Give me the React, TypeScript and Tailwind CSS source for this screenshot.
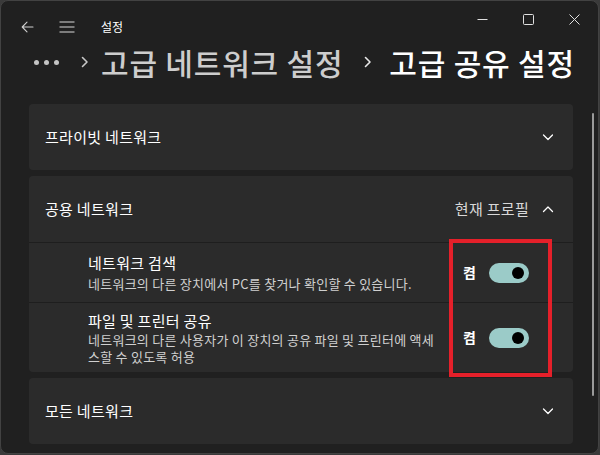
import React from "react";

const font = { fontFamily: '"Noto Sans CJK KR", "Noto Sans", sans-serif' };

function ChevronDown() {
  return (
    <svg width="14" height="14" viewBox="0 0 14 14" fill="none">
      <path d="M2.5 5 L7 9.5 L11.5 5" stroke="#ffffff" strokeWidth="1.3" strokeLinecap="round" strokeLinejoin="round" />
    </svg>
  );
}
function ChevronUp() {
  return (
    <svg width="14" height="14" viewBox="0 0 14 14" fill="none">
      <path d="M2.5 9.5 L7 5 L11.5 9.5" stroke="#ffffff" strokeWidth="1.3" strokeLinecap="round" strokeLinejoin="round" />
    </svg>
  );
}

function Toggle() {
  return (
    <div className="flex items-center gap-[13px]">
      <span className="text-[14px] font-semibold text-white">켬</span>
      <div className="w-[40px] h-[20px] rounded-full bg-[#9bcbc8] flex items-center justify-end pr-[5px]">
        <div className="w-[12px] h-[12px] rounded-full bg-black" />
      </div>
    </div>
  );
}

function Header({ title, right, up }: { title: string; right?: string; up?: boolean }) {
  return (
    <div className="h-[66px] flex items-center pl-[16px] pr-[18px]">
      <span className="flex-1 text-[15px] tracking-[0.3px] text-white">{title}</span>
      {right && <span className="text-[15px] tracking-[0.3px] text-[#d8d8d8] mr-[12px]">{right}</span>}
      {up ? <ChevronUp /> : <ChevronDown />}
    </div>
  );
}

export default function App() {
  return (
    <div className="w-[600px] h-[455px] bg-[#3a3a3a] overflow-hidden" style={font}>
      <div className="relative w-[599px] h-[454px] bg-[#202020] rounded-[8px] border border-[#424242] overflow-hidden">
        {/* title bar */}
        <div className="h-[46px] flex items-start">
          <div className="flex items-center h-[52px] pl-[20px]">
            <svg width="13" height="12" viewBox="0 0 13 12" fill="none">
              <path d="M12 6 H1.5 M6 1.2 L1.2 6 L6 10.8" stroke="#cfcfcf" strokeWidth="1.1" strokeLinecap="round" strokeLinejoin="round" />
            </svg>
            <svg className="ml-[25px]" width="16" height="12" viewBox="0 0 16 12" fill="none">
              <path d="M0.5 1 H15.5 M0.5 6 H15.5 M0.5 11 H15.5" stroke="#d8d8d8" strokeWidth="1.1" />
            </svg>
            <span className="ml-[26px] text-[12px] text-white">설정</span>
          </div>
          <div className="flex-1" />
          <div className="flex items-center h-[36px] pr-[18px] gap-[35px]">
            <svg width="11" height="11" viewBox="0 0 11 11"><path d="M0.5 5.5 H10.5" stroke="#e0e0e0" strokeWidth="1" /></svg>
            <svg width="11" height="11" viewBox="0 0 11 11"><rect x="0.5" y="0.5" width="10" height="10" rx="1" fill="none" stroke="#e0e0e0" strokeWidth="1" /></svg>
            <svg width="11" height="11" viewBox="0 0 11 11"><path d="M0.5 0.5 L10.5 10.5 M10.5 0.5 L0.5 10.5" stroke="#e0e0e0" strokeWidth="1" /></svg>
          </div>
        </div>

        {/* breadcrumb */}
        <div className="h-[30px] flex items-center pl-[33px] text-[30px] tracking-[0.8px] font-medium leading-none">
          <div className="flex items-center gap-[5px]">
            <div className="w-[5px] h-[5px] rounded-full bg-[#c4c4c4]" />
            <div className="w-[5px] h-[5px] rounded-full bg-[#c4c4c4]" />
            <div className="w-[5px] h-[5px] rounded-full bg-[#c4c4c4]" />
          </div>
          <svg className="ml-[22px]" width="8" height="12" viewBox="0 0 8 12" fill="none">
            <path d="M1.5 1.5 L6 6 L1.5 10.5" stroke="#c8c8c8" strokeWidth="1.6" strokeLinecap="round" strokeLinejoin="round" />
          </svg>
          <span className="ml-[12px] text-[#cdcdcd]">고급 네트워크 설정</span>
          <svg className="ml-[21px]" width="8" height="12" viewBox="0 0 8 12" fill="none">
            <path d="M1.5 1.5 L6 6 L1.5 10.5" stroke="#e8e8e8" strokeWidth="1.6" strokeLinecap="round" strokeLinejoin="round" />
          </svg>
          <span className="ml-[17px] text-white">고급 공유 설정</span>
        </div>

        {/* content */}
        <div className="pl-[28px] pr-[25px] pt-[27px] flex flex-col gap-[6px]">
          <div className="bg-[#2b2b2b] rounded-[4px]">
            <Header title="프라이빗 네트워크" />
          </div>
          <div className="bg-[#2b2b2b] rounded-[4px]">
            <Header title="공용 네트워크" right="현재 프로필" up />
            <div className="h-[60px] border-t border-[#1e1e1e] flex items-center pl-[59px] pr-[44px]">
              <div className="flex-1 flex flex-col">
                <span className="text-[15px] tracking-[0.3px] text-white leading-[20px]">네트워크 검색</span>
                <span className="text-[13px] tracking-[0.25px] text-[#d0d0d0] leading-[17px] mt-[2px]">네트워크의 다른 장치에서 PC를 찾거나 확인할 수 있습니다.</span>
              </div>
              <Toggle />
            </div>
            <div className="h-[70px] border-t border-[#1e1e1e] flex items-center pl-[59px] pr-[44px]">
              <div className="flex-1 flex flex-col">
                <span className="text-[15px] tracking-[0.3px] text-white leading-[20px]">파일 및 프린터 공유</span>
                <span className="w-[352px] break-all text-[13px] tracking-[0.25px] text-[#d0d0d0] leading-[17px]">네트워크의 다른 사용자가 이 장치의 공유 파일 및 프린터에 액세스할 수 있도록 허용</span>
              </div>
              <Toggle />
            </div>
          </div>
          <div className="bg-[#2b2b2b] rounded-[4px]">
            <Header title="모든 네트워크" />
          </div>
        </div>

        {/* scrollbar */}
        <div className="absolute left-[591px] top-[112px] w-[2px] h-[283px] rounded-full bg-[#9a9a9a]" />

        {/* red highlight */}
        <div className="absolute left-[448px] top-[238px] w-[103px] h-[138px] border-[4px] border-[#e5202a]" />
      </div>
    </div>
  );
}
